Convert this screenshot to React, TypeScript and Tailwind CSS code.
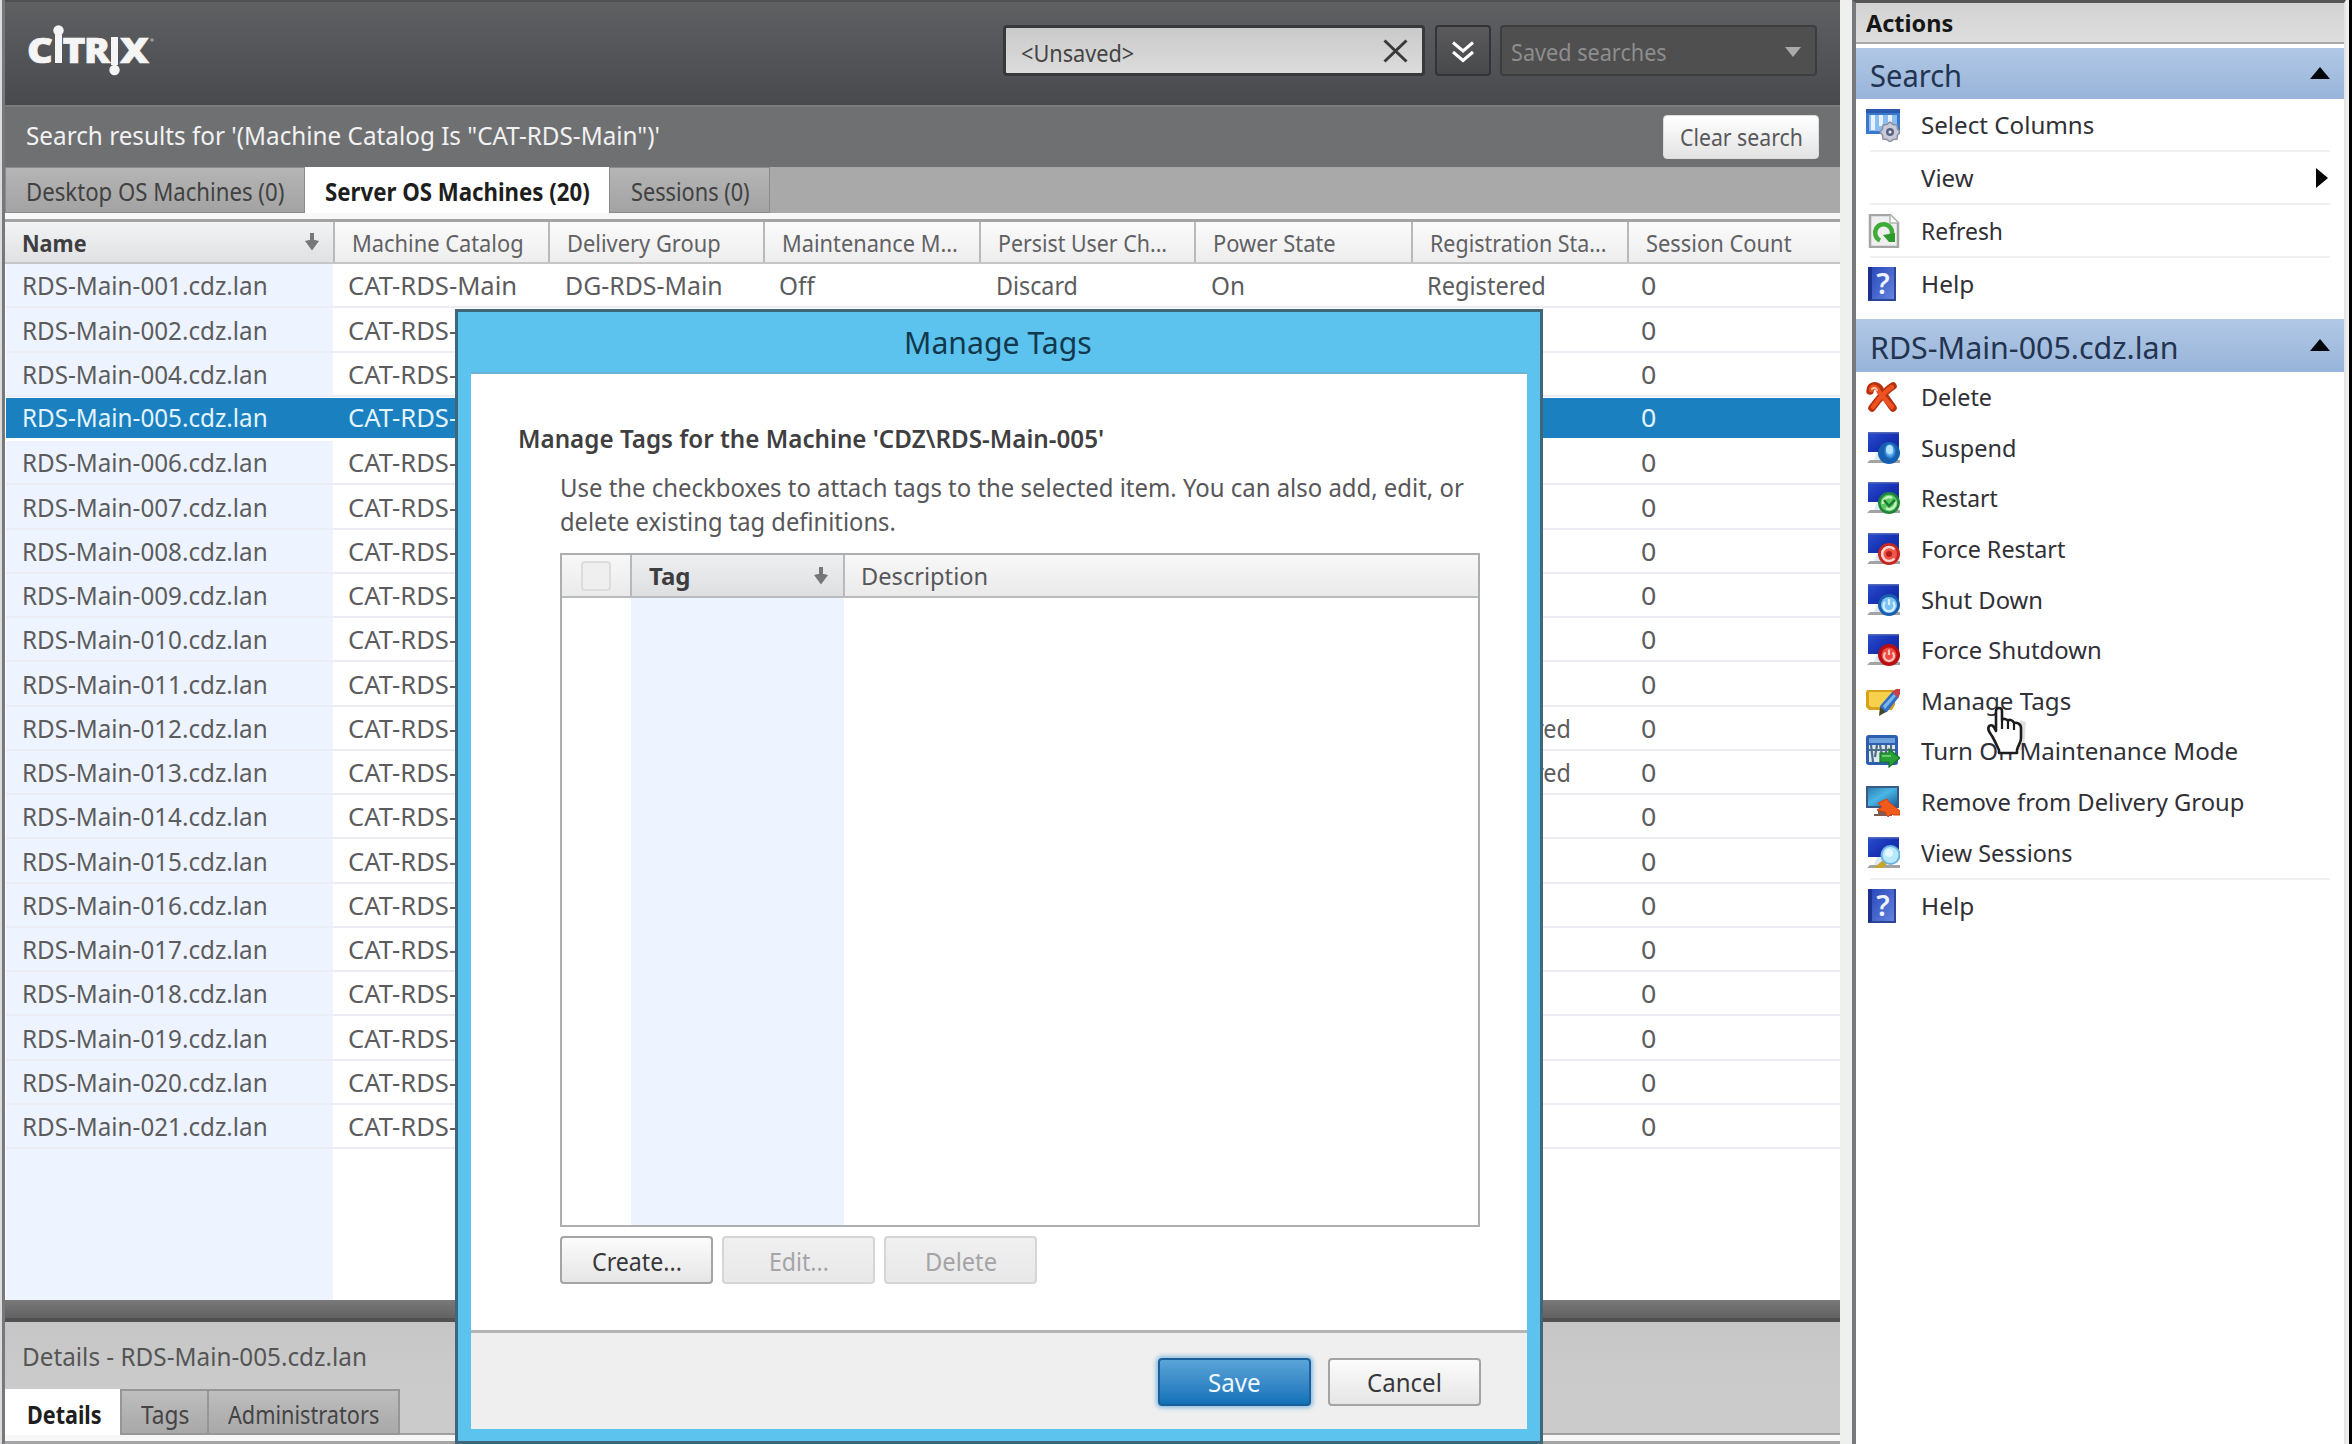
import { useLayoutEffect, useRef, type ReactNode } from "react";

/* Text line condensed or widened to an exact advance width. */
function T({ w, children, className = "" }: { w: number; children: string; className?: string }) {
  const ref = useRef<HTMLSpanElement>(null);
  useLayoutEffect(() => {
    const el = ref.current;
    if (!el) return;
    el.style.transform = "none";
    el.style.transform = `scaleX(${w / el.offsetWidth})`;
  }, [w, children]);
  return (
    <span className={`block shrink-0 whitespace-nowrap ${className}`} style={{ width: w }}>
      <span ref={ref} className="inline-block origin-left whitespace-nowrap">
        {children}
      </span>
    </span>
  );
}

const columns = [
  { label: "Machine Catalog", w: 172, box: "w-[215px]" },
  { label: "Delivery Group", w: 154, box: "w-[215px]" },
  { label: "Maintenance M...", w: 176, box: "w-[216px]" },
  { label: "Persist User Ch...", w: 169, box: "w-[215px]" },
  { label: "Power State", w: 123, box: "w-[217px]" },
  { label: "Registration Sta...", w: 177, box: "w-[216px]" },
  { label: "Session Count", w: 146, box: "w-[211px]" },
];

const machines = [
  "001", "002", "004", "005", "006", "007", "008", "009", "010", "011",
  "012", "013", "014", "015", "016", "017", "018", "019", "020", "021",
];

function SortArrow() {
  return (
    <svg width="16" height="20" viewBox="0 0 16 20" className="shrink-0">
      <path d="M8 1v13" stroke="#777" strokeWidth="4" />
      <path d="M1 9 8 18.500l7-9.500-4-1H5z" fill="#777" />
    </svg>
  );
}

function Logo() {
  return (
    <svg width="140" height="60" viewBox="0 0 140 60" className="block">
      <g fill="#f5f5f5" stroke="#f5f5f5" strokeWidth="0.700" fontFamily="Open Sans, sans-serif" fontWeight="800" fontSize="36">
        <text y="41" x="-1" textLength="26" lengthAdjust="spacingAndGlyphs">C</text>
        <text y="41" x="34.500" textLength="23" lengthAdjust="spacingAndGlyphs">T</text>
        <text y="41" x="56" textLength="26" lengthAdjust="spacingAndGlyphs">R</text>
        <text y="41" x="92" textLength="29" lengthAdjust="spacingAndGlyphs">X</text>
      </g>
      <g fill="#f5f5f5">
        <path d="M27 13h7v28h-7zM83 15h7v28h-7z" />
        <circle cx="30.500" cy="8.500" r="5.200" />
        <circle cx="86.500" cy="48" r="5.200" />
      </g>
      <circle cx="124" cy="18" r="1.800" fill="#9a9a9a" />
    </svg>
  );
}

function HeaderBar() {
  return (
    <div className="flex h-[105px] items-start border-t-2 border-[#515151] bg-linear-to-b from-[#5f6062] to-[#494a4e] pl-[23px]">
      <div className="mt-[20px] w-[975px]">
        <Logo />
      </div>
      <div className="mt-[23px] flex h-[51px] w-[422px] items-center justify-between rounded border-3 border-[#38393b] bg-linear-to-b from-[#cacaca] to-[#dcdcdc] pr-[14px] pl-[15px]">
        <T w={113} className="pt-[4px] text-[24px] text-[#444]">{"<Unsaved>"}</T>
        <svg width="25" height="24" viewBox="0 0 25 24">
          <path d="M1.500 1.500 23.500 22.500M23.500 1.500 1.500 22.500" stroke="#3a3a3a" strokeWidth="3" />
        </svg>
      </div>
      <div className="mt-[23px] ml-[10px] flex h-[51px] w-[56px] items-center justify-center rounded border-2 border-[#333436] bg-linear-to-b from-[#5a5a5c] to-[#48494b]">
        <svg width="24" height="22" viewBox="0 0 24 22" fill="none" stroke="#fff" strokeWidth="3" className="mt-[2px]">
          <path d="M2 1.500 12 10 22 1.500M2 11 12 19.500 22 11" />
        </svg>
      </div>
      <div className="mt-[23px] ml-[9px] flex h-[51px] w-[317px] items-center justify-between rounded border-2 border-[#3d3d3f] bg-[#4f4f50] pr-[14px] pl-[9px]">
        <T w={156} className="pt-[3px] text-[24px] text-[#8d8d8d]">Saved searches</T>
        <svg width="16" height="10" viewBox="0 0 16 10" className="mt-[3px]">
          <path d="M0 0h16L8 10z" fill="#aaa" />
        </svg>
      </div>
    </div>
  );
}

function MachineRow({ id, index }: { id: string; index: number }) {
  const selected = id === "005";
  const unregistered = id === "012" || id === "013";
  const regText = unregistered ? "Unregistered" : "Registered";
  return (
    <div className={`flex h-[44.25px] text-[25px] ${selected ? "pt-px pb-[3px] text-[#e4f4ff]" : "text-[#5c5c5e]"}`}>
      <div className={`flex min-w-0 grow ${selected ? "bg-[#1a80bf]" : "border-b-2 border-[#ebedf2] *:pt-[2px]"}`}>
        <div className={`flex w-[327px] items-center pl-[16px] ${selected ? "" : "bg-[#edf4ff]"}`}>
          <T w={246}>{`RDS-Main-${id}.cdz.lan`}</T>
        </div>
        <div className="flex w-[215px] items-center pl-[15px]"><T w={169}>CAT-RDS-Main</T></div>
        <div className="flex w-[215px] items-center pl-[17px]">{index === 0 && <T w={158}>DG-RDS-Main</T>}</div>
        <div className="flex w-[216px] items-center pl-[16px]">{index === 0 && <T w={36}>Off</T>}</div>
        <div className="flex w-[215px] items-center pl-[17px]">{index === 0 && <T w={82}>Discard</T>}</div>
        <div className="flex w-[217px] items-center pl-[17px]">{index === 0 && <T w={34}>On</T>}</div>
        <div className="flex w-[216px] items-center pl-[16px]">
          {(index === 0 || unregistered) && <T w={unregistered ? 144 : 119}>{regText}</T>}
        </div>
        <div className="flex w-[213px] items-center pl-[14px]"><T w={15}>0</T></div>
      </div>
    </div>
  );
}

function MainPane() {
  return (
    <div className="flex w-[1840px] shrink-0 border-l-2 border-[#dcdcdc]">
      <div className="flex min-w-0 grow flex-col border-l-3 border-[#77787b]">
        <HeaderBar />
        <div className="flex h-[62px] items-center justify-between border-t-2 border-[#7b7c7e] bg-[#6f7072] pr-[21px] pl-[21px]">
          <T w={634} className="mb-[3px] text-[25px] text-[#f2f2f2]">{`Search results for '(Machine Catalog Is "CAT-RDS-Main")'`}</T>
          <div className="mb-px flex h-[44px] w-[156px] items-center justify-center rounded border border-[#ddd] bg-linear-to-b from-white to-[#e3e3e4]">
            <T w={123} className="text-[24px] text-[#58585c]">Clear search</T>
          </div>
        </div>
        <div className="flex h-[46px] bg-[#a9a9a9] text-[25px] text-[#414141] *:pt-[4px]">
          <div className="flex w-[300px] items-center border border-[#8b8b8b] bg-linear-to-b from-[#b5b5b5] to-[#a3a3a3] pl-[20px]">
            <T w={258}>Desktop OS Machines (0)</T>
          </div>
          <div className="flex w-[304px] items-center bg-white pl-[20px] font-bold text-[#1e1e1e]">
            <T w={265}>Server OS Machines (20)</T>
          </div>
          <div className="flex w-[161px] items-center border border-[#8b8b8b] bg-linear-to-b from-[#b5b5b5] to-[#a3a3a3] pl-[21px]">
            <T w={119}>Sessions (0)</T>
          </div>
        </div>
        <div className="h-[6px] bg-[#f8f8f8]" />
        <div className="flex h-[45px] border-t-3 border-b-2 border-t-[#a3a3a3] border-b-[#c6c6c6] bg-linear-to-b from-[#fbfbfb] to-[#ededee] text-[24px] text-[#616164] *:pt-[2px]">
          <div className="flex w-[330px] items-center justify-between border-r-2 border-[#b9b9b9] bg-linear-to-b from-[#f2f3f4] to-[#dfe1e3] pr-[13px] pl-[17px] font-bold text-[#3e3e40]">
            <T w={65}>Name</T>
            <div className="-mt-[3px]"><SortArrow /></div>
          </div>
          {columns.map((c, i) => (
            <div key={c.label} className={`flex items-center pl-[17px] ${c.box} ${i < 6 ? "border-r-2 border-[#b9b9b9]" : ""}`}>
              <T w={c.w}>{c.label}</T>
            </div>
          ))}
        </div>
        <div className="ml-px flex flex-col">
          {machines.map((id, i) => (
            <MachineRow key={id} id={id} index={i} />
          ))}
        </div>
        <div className="flex grow bg-white">
          <div className="ml-px w-[327px] bg-[#edf4ff]" />
        </div>
        <div className="h-[22px] shrink-0 border-b-4 border-[#515151] bg-linear-to-b from-[#797979] to-[#626262]" />
        <div className="flex h-[67px] shrink-0 items-center bg-linear-to-b from-[#c6c6c6] to-[#cbcbcb] pt-[3px] pl-[17px] text-[25px] text-[#555]">
          <T w={345}>Details - RDS-Main-005.cdz.lan</T>
        </div>
        <div className="flex h-[46px] shrink-0 bg-[#cbcbcb] text-[25px] text-[#444] *:pt-[5px]">
          <div className="flex w-[115px] items-center bg-white pl-[22px] font-bold text-[#1e1e1e]"><T w={75}>Details</T></div>
          <div className="flex w-[89px] items-center border-2 border-[#969696] bg-linear-to-b from-[#bebebe] to-[#a8a8a8] pl-[19px]"><T w={48}>Tags</T></div>
          <div className="flex w-[191px] items-center border-2 border-l-0 border-[#969696] bg-linear-to-b from-[#bebebe] to-[#a8a8a8] pl-[19px]"><T w={151}>Administrators</T></div>
          <div className="grow border-b-2 border-[#a0a0a0]" />
        </div>
        <div className="h-[9px] shrink-0 border-b-3 border-[#a5a5a5] bg-[#f7f7f7]" />
      </div>
    </div>
  );
}

function Svg({ children }: { children: ReactNode }) {
  return (
    <svg width="34" height="34" viewBox="0 0 34 34" className="block shrink-0">
      {children}
    </svg>
  );
}

function Gradients() {
  return (
    <svg width="0" height="0" className="absolute">
      <defs>
        <linearGradient id="screen" x1="0" y1="0" x2="1" y2="1">
          <stop offset="0" stopColor="#2a4fd0" />
          <stop offset="0.500" stopColor="#1733b4" />
          <stop offset="1" stopColor="#122a98" />
        </linearGradient>
        <linearGradient id="cyan" x1="0" y1="0" x2="1" y2="1">
          <stop offset="0" stopColor="#2f7fae" />
          <stop offset="0.450" stopColor="#4ab6e6" />
          <stop offset="1" stopColor="#1c5f9e" />
        </linearGradient>
        <radialGradient id="ball">
          <stop offset="0" stopColor="#b6e6ff" />
          <stop offset="0.500" stopColor="#5fb4f2" />
          <stop offset="1" stopColor="#1a66c0" />
        </radialGradient>
      </defs>
    </svg>
  );
}

function Screen({ children }: { children: ReactNode }) {
  return (
    <Svg>
      <path d="M2 1h31v23H14v-3H2z" fill="url(#screen)" />
      <path d="M2 1h31v1.500H2z" fill="#5468b8" />
      <path d="M11 21h9v8H8z" fill="#dceaf6" />
      <path d="M4 29h30v3H1z" fill="#a3a3a3" />
      {children}
    </Svg>
  );
}

const icons: Record<string, ReactNode> = {
  columns: (
    <Svg>
      <path d="M0 1h34v25H0z" fill="#3a78cc" />
      <path d="M0 1h34v4H0z" fill="#2a59ae" />
      <path d="M3 7h28v16H3z" fill="#8dbcf0" />
      <path d="M5 7h4v15H5zM13 7h4v11h-4zM22 7h4v7h-4z" fill="#e6f3ff" />
      <path d="M24 14l3 2.500 4 .5.500 4 2.500 3-2.500 3-.500 4-4 .500-3 2.500-3-2.500-4-.500-.500-4-2.500-3 2.500-3 .500-4 4-.500z" fill="#c9ccd8" stroke="#8a8fa3" strokeWidth="1.500" />
      <circle cx="24" cy="24" r="4" fill="#5a6382" />
      <circle cx="24" cy="24" r="1.500" fill="#e5eaf5" />
    </Svg>
  ),
  refresh: (
    <Svg>
      <path d="M4 1h20l8 8v24H4z" fill="#efefef" stroke="#a5a5a5" strokeWidth="2.500" strokeLinejoin="round" />
      <path d="M24 1v8h8" fill="#fff" stroke="#b5b5b5" strokeWidth="1.500" />
      <path d="M14 26.500A8.500 8.500 0 1 1 25 23" fill="none" stroke="#3fab3a" strokeWidth="4.500" />
      <path d="M17 21l12-2v9h-6z" fill="#2d9a2c" />
    </Svg>
  ),
  help: (
    <div className="ml-[2px] flex h-[34px] w-[28px] items-center justify-center border-r-2 border-b-2 border-l-4 border-r-[#2d4596] border-b-[#2d4596] border-l-[#1d318f] bg-linear-to-br from-[#2c48bb] to-[#6483dd] text-[29px] leading-[34px] font-semibold text-[#edf3ff]">
      ?
    </div>
  ),
  delete: (
    <Svg>
      <g fill="none" strokeLinecap="round">
        <path d="M4 11C4 4 12 4 15 11L27 28M27 6C20 10 12 20 6 28" stroke="#b5300d" strokeWidth="7.500" />
        <path d="M5 10C6 5 11 6 13 12L26 27M26 7C19 11 12 20 7 27" stroke="#ee5223" strokeWidth="4.500" />
        <path d="M6 9c2-2 4-1 5 1" stroke="#ffc3a5" strokeWidth="2" />
      </g>
    </Svg>
  ),
  suspend: (
    <Screen>
      <circle cx="23" cy="22" r="11" fill="#165fae" />
      <ellipse cx="24" cy="20" rx="6" ry="8" fill="url(#ball)" />
      <ellipse cx="23.500" cy="18.500" rx="3.500" ry="4.500" fill="#b4e3ff" />
    </Screen>
  ),
  restart: (
    <Screen>
      <circle cx="23" cy="22" r="11" fill="#23833a" />
      <circle cx="23" cy="22" r="8.500" fill="#5ccb62" />
      <path d="M17 23a6 6 0 0 1 9-6M29 20a6 6 0 0 1-9 7" fill="none" stroke="#c5f2c0" strokeWidth="2.500" />
      <path d="M18 19l5 6 6-6" fill="none" stroke="#1d7d33" strokeWidth="2.500" />
    </Screen>
  ),
  forceRestart: (
    <Screen>
      <circle cx="23" cy="22" r="11" fill="#c52620" />
      <circle cx="23" cy="22" r="8" fill="#ed554b" />
      <path d="M28.500 17.500a7 7 0 1 0 0 9" fill="none" stroke="#ffd4cd" strokeWidth="2.600" />
      <circle cx="23" cy="22" r="3" fill="#b51d18" />
    </Screen>
  ),
  shutdown: (
    <Screen>
      <circle cx="23" cy="22" r="11" fill="#1a5eae" />
      <circle cx="23" cy="22" r="8" fill="#7cc3f4" />
      <path d="M19 19a5.500 5.500 0 1 0 8 0M23 16v6" fill="none" stroke="#d5f0ff" strokeWidth="2.200" />
    </Screen>
  ),
  forceShutdown: (
    <Screen>
      <circle cx="23" cy="22" r="11" fill="#b80f12" />
      <circle cx="23" cy="22" r="7.500" fill="#ee4a42" />
      <path d="M19.500 19.500a5 5 0 1 0 7 0M23 16.500v5.500" fill="none" stroke="#ffc5bd" strokeWidth="2.200" />
    </Screen>
  ),
  tags: (
    <Svg>
      <path d="M1 6h28v15l-3 5H3l-3-3V8z" fill="#d7a21d" />
      <path d="M3 8h24v12l-3 3H5l-2-2z" fill="#f7d04c" />
      <path d="M14 22 27 7l6 6-12 15-6 1z" fill="#2f70c4" />
      <path d="M17 22 28 10l2 2-11 13z" fill="#7ab6ee" />
      <path d="M26 8l4-3h4v5l-2 4z" fill="#c8404c" />
      <path d="M14 23l6 5-7 4z" fill="#4a4426" />
    </Svg>
  ),
  maintenance: (
    <Svg>
      <rect x="0" y="1" width="32" height="30" rx="3" fill="#2d5fae" />
      <path d="M3 4h26v5H3z" fill="#6fa1dc" />
      <path d="M3 11h26v17H3z" fill="#dfe9f1" />
      <path d="M5 11l2 17M11 11l-2 12M14 11l2 10M20 11v10M25 11v7M3 16h26" stroke="#4e6c86" strokeWidth="2.200" />
      <path d="M14 19h9v-4l11 9-11 9v-5h-9z" fill="#29a035" stroke="#15742a" strokeWidth="1.200" />
      <path d="M16 22h9" stroke="#7ed87a" strokeWidth="1.500" />
    </Svg>
  ),
  remove: (
    <Svg>
      <path d="M0 1h33v22H0z" fill="#3a5a86" />
      <path d="M2 3h29v18H2z" fill="url(#cyan)" />
      <path d="M12 25h10v4h4v2H8v-2h4z" fill="#7d5c52" />
      <path d="M12 18 21 14l2 3 11 9v4h-6l-3-1-3 3-3-5-8-2 5-3z" fill="#f05a1c" stroke="#d8400e" strokeWidth="1" />
    </Svg>
  ),
  sessions: (
    <Screen>
      <path d="M8 32 17 24l4 4-4 4z" fill="#c9a52a" />
      <circle cx="24.500" cy="19" r="9" fill="#b8e8fc" stroke="#6eb2e0" strokeWidth="2" />
      <circle cx="23" cy="17" r="4" fill="#e3f8ff" />
    </Screen>
  ),
};

type Action = { icon: string; label: string; w: number };

const machineActions: Action[] = [
  { icon: "delete", label: "Delete", w: 71 },
  { icon: "suspend", label: "Suspend", w: 95 },
  { icon: "restart", label: "Restart", w: 77 },
  { icon: "forceRestart", label: "Force Restart", w: 144 },
  { icon: "shutdown", label: "Shut Down", w: 122 },
  { icon: "forceShutdown", label: "Force Shutdown", w: 181 },
  { icon: "tags", label: "Manage Tags", w: 150 },
  { icon: "maintenance", label: "Turn On Maintenance Mode", w: 317 },
  { icon: "remove", label: "Remove from Delivery Group", w: 323 },
  { icon: "sessions", label: "View Sessions", w: 152 },
];

function ActionRow({ icon, label, w, className }: Action & { className: string }) {
  return (
    <div className={`flex items-center ${className}`}>
      <div className="w-[55px] shrink-0">{icons[icon]}</div>
      <T w={w} className="text-[24px] text-[#303036]">{label}</T>
      {label === "View" && (
        <svg width="12" height="20" viewBox="0 0 12 20" className="mr-[16px] ml-auto">
          <path d="M0 0l12 10L0 20z" fill="#050505" />
        </svg>
      )}
    </div>
  );
}

function GroupHeader({ label, w, className }: { label: string; w: number; className: string }) {
  return (
    <div className={`flex items-center justify-between bg-linear-to-b from-[#b1c8e5] to-[#98b4da] pr-[14px] pl-[14px] ${className}`}>
      <T w={w} className="pt-[3px] text-[31px] text-[#22344f]">{label}</T>
      <svg width="20" height="12" viewBox="0 0 20 12" className="mb-px">
        <path d="M10 0l10 12H0z" fill="#05070c" />
      </svg>
    </div>
  );
}

function Rule() {
  return <div className="mr-[14px] ml-[4px] h-[2px] bg-[#f0f0f1]" />;
}

function ActionsPane() {
  return (
    <div className="flex w-[512px] shrink-0 bg-[#efeff0]">
      <div className="ml-[12px] flex w-[494px] flex-col border-t-3 border-r-2 border-l-4 border-t-[#555] border-r-[#e4e4e6] border-l-[#77787c] bg-white">
        <div className="flex h-[41px] items-center border-b-2 border-[#a9a9a9] bg-linear-to-b from-[#d2d2d2] to-[#dedede] pl-[10px]">
          <T w={87} className="text-[24px] font-bold text-[#161616]">Actions</T>
        </div>
        <GroupHeader label="Search" w={92} className="mt-[4px] h-[51px]" />
        <div className="flex flex-col pl-[10px]">
          <ActionRow icon="columns" label="Select Columns" w={173} className="h-[51px]" />
          <Rule />
          <ActionRow icon="none" label="View" w={53} className="h-[51px]" />
          <Rule />
          <ActionRow icon="refresh" label="Refresh" w={82} className="h-[51px]" />
          <Rule />
          <ActionRow icon="help" label="Help" w={53} className="h-[51px]" />
        </div>
        <GroupHeader label="RDS-Main-005.cdz.lan" w={308} className="mt-[10px] h-[53px]" />
        <div className="flex flex-col pl-[10px]">
          {machineActions.map((a) => (
            <ActionRow key={a.label} {...a} className="h-[50.6px]" />
          ))}
          <Rule />
          <ActionRow icon="help" label="Help" w={53} className="h-[52px]" />
        </div>
      </div>
      <div className="ml-auto w-[3px] bg-black" />
    </div>
  );
}

function DialogButton({ label, w, className }: { label: string; w: number; className: string }) {
  return (
    <div className={`flex h-[48px] w-[153px] items-center justify-center rounded border-2 pt-[3px] text-[25px] ${className}`}>
      <T w={w}>{label}</T>
    </div>
  );
}

const enabled = "border-[#a3a4a6] bg-linear-to-b from-[#fcfcfc] to-[#e6e6e7] text-[#38383a]";
const disabled = "border-[#d6d6d6] bg-linear-to-b from-[#f0f0f0] to-[#e8e8e8] text-[#a4a4a6]";

function TagsDialog() {
  return (
    <div className="absolute top-[309px] left-[455px] flex h-[1135px] w-[1088px] flex-col border-3 border-[#3f6679] bg-[#5cc3ee] px-[13px] pb-[12px]">
      <div className="flex h-[62px] shrink-0 items-center justify-center border-b-2 border-[#6db3d3] pr-[2px]">
        <T w={188} className="text-[31px] text-[#12384d]">Manage Tags</T>
      </div>
      <div className="flex grow flex-col bg-white pt-[47px] pl-[47px]">
        <T w={586} className="text-[25px] leading-[34px] font-semibold text-[#3f3f42]">{"Manage Tags for the Machine 'CDZ\\RDS-Main-005'"}</T>
        <div className="flex flex-col pt-[15px] pl-[42px] text-[25px] leading-[34px] text-[#57575a]">
          <T w={904}>Use the checkboxes to attach tags to the selected item. You can also add, edit, or</T>
          <T w={336}>delete existing tag definitions.</T>
          <div className="mt-[15px] flex h-[674px] w-[920px] flex-col border-2 border-[#adaeb0] leading-normal">
            <div className="flex h-[43px] shrink-0 border-b-2 border-[#b9babc] bg-linear-to-b from-[#f8f8f8] to-[#eaeaeb] text-[24px]">
              <div className="flex w-[70px] items-center justify-center border-r-2 border-[#b9b9bb]">
                <div className="size-[30px] rounded border-2 border-[#dcdcdc] bg-[#efefef]" />
              </div>
              <div className="flex w-[213px] items-center justify-between border-r-2 border-[#b9b9bb] bg-linear-to-b from-[#eeeff0] to-[#dddfe1] pr-[14px] pl-[17px] font-bold text-[#3e3e40]">
                <T w={41} className="pt-px">Tag</T>
                <SortArrow />
              </div>
              <div className="flex items-center pl-[16px]">
                <T w={127} className="pt-px">Description</T>
              </div>
            </div>
            <div className="flex grow">
              <div className="ml-[69px] w-[213px] bg-[#edf4ff]" />
            </div>
          </div>
          <div className="mt-[9px] flex gap-[9px] leading-normal">
            <DialogButton label="Create..." w={90} className={enabled} />
            <DialogButton label="Edit..." w={60} className={disabled} />
            <DialogButton label="Delete" w={72} className={disabled} />
          </div>
        </div>
      </div>
      <div className="flex h-[99px] shrink-0 items-center justify-end gap-[17px] border-t-3 border-[#b3b4b6] bg-[#efefef] pt-px pr-[46px]">
        <DialogButton label="Save" w={53} className="border-[#1a5f9b] bg-linear-to-b from-[#5aa4d8] to-[#0f72b8] text-[#eef8ff] shadow-[0_0_4px_2px_#8bbde0]" />
        <DialogButton label="Cancel" w={75} className={enabled} />
      </div>
    </div>
  );
}

function HandCursor() {
  return (
    <svg width="42" height="54" viewBox="0 0 42 54" className="absolute top-[706px] left-[1985px]">
      <path d="M17 44h22l2-28-5-2z" fill="#000" opacity="0.120" />
      <path
        d="M11 5c0-4 6-4 6 0v9c1-2 5-1 6 1 1-2 5-1 6 2 3-1 7 1 7 5v10c0 5-3 7-4 12v3H14v-3c-2-4-4-9-7-14-3-4-5-7-3-10 3-2 5 0 7 5z"
        fill="#fff"
        stroke="#1c1c1c"
        strokeWidth="2.600"
        strokeLinejoin="round"
      />
      <path d="M17 14v9M23 16v7M29 18v6" stroke="#1c1c1c" strokeWidth="2.200" />
    </svg>
  );
}

export default function App() {
  return (
    <div className="relative flex h-[1444px] w-[2352px] overflow-hidden bg-white font-['Noto_Sans',sans-serif]">
      <Gradients />
      <MainPane />
      <ActionsPane />
      <TagsDialog />
      <HandCursor />
    </div>
  );
}
